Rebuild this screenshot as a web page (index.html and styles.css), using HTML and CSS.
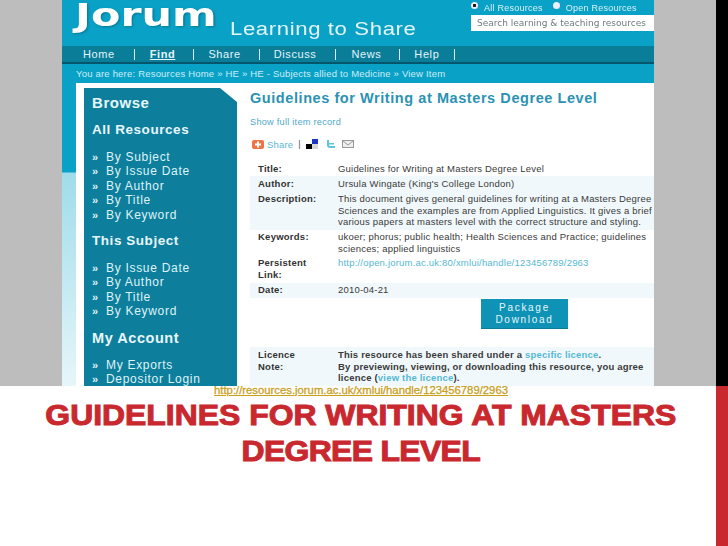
FILE: index.html
```html
<!DOCTYPE html>
<html lang="en">
<head>
<meta charset="utf-8">
<title>Guidelines for Writing at Masters Degree Level</title>
<link rel="stylesheet" href="styles.css">
</head>
<body>
<div class="slide">
  <div class="top">
    <div class="grey"></div>
    <div class="shot">
      <header class="masthead">
        <div class="logo">Jorum</div>
        <div class="tagline">Learning to Share</div>
        <div class="search">
          <div class="radios">
            <span class="radio on"></span><span class="rlabel">All Resources</span>
            <span class="radio"></span><span class="rlabel">Open Resources</span>
          </div>
          <div class="searchbox">Search learning &amp; teaching resources</div>
        </div>
      </header>
      <nav class="nav">
        <span class="navitem home">Home</span><i></i>
        <span class="navitem find">Find</span><i></i>
        <span class="navitem share">Share</span><i></i>
        <span class="navitem discuss">Discuss</span><i></i>
        <span class="navitem news">News</span><i></i>
        <span class="navitem help">Help</span><i></i>
      </nav>
      <div class="crumbs">You are here: Resources Home » HE » HE - Subjects allied to Medicine » View Item</div>
      <div class="body">
        <div class="gutter"></div>
        <div class="page">
          <aside class="side">
            <h2 class="browse">Browse</h2>
            <h3 class="h-all">All Resources</h3>
            <ul>
              <li><b>»</b>By Subject</li>
              <li><b>»</b>By Issue Date</li>
              <li><b>»</b>By Author</li>
              <li><b>»</b>By Title</li>
              <li><b>»</b>By Keyword</li>
            </ul>
            <h3 class="h-sub">This Subject</h3>
            <ul>
              <li><b>»</b>By Issue Date</li>
              <li><b>»</b>By Author</li>
              <li><b>»</b>By Title</li>
              <li><b>»</b>By Keyword</li>
            </ul>
            <h3 class="h-acc">My Account</h3>
            <ul>
              <li><b>»</b>My Exports</li>
              <li><b>»</b>Depositor Login</li>
            </ul>
          </aside>
          <main class="main">
            <h1 class="doc-title">Guidelines for Writing at Masters Degree Level</h1>
            <a class="full">Show full item record</a>
            <div class="sharebar">
              <svg class="ico" width="12" height="9" viewBox="0 0 12 9"><rect width="12" height="9" rx="2" fill="#ee7446"/><path d="M6 1.5v6M3 4.5h6" stroke="#fff" stroke-width="2"/></svg>
              <span class="sharetxt">Share</span>
              <span class="pipe">|</span>
              <svg class="ico" width="13" height="10" viewBox="0 0 13 10"><rect x="0" y="5" width="6" height="5" fill="#000"/><rect x="6" y="0" width="6" height="5" fill="#1a35c8"/><rect x="6" y="5" width="6" height="5" fill="#d8d8d8"/></svg>
              <svg class="ico" width="11" height="9" viewBox="0 0 11 9"><path d="M2 0v5q0 3 3 3h5V6H5Q4 6 4 4.500h5V3H4V0z" fill="#5cc6df"/></svg>
              <svg class="ico" width="12" height="8" viewBox="0 0 12 8"><rect x=".5" y=".5" width="11" height="7" fill="#eee" stroke="#999"/><path d="M.5.5L6 5l5.500-4.500" fill="none" stroke="#999"/></svg>
            </div>
            <div class="meta">
              <div class="row r-title"><span class="k">Title:</span><span class="v">Guidelines for Writing at Masters Degree Level</span></div>
              <div class="row alt r-auth"><span class="k">Author:</span><span class="v">Ursula Wingate (King's College London)</span></div>
              <div class="row alt r-desc"><span class="k">Description:</span><span class="v">This document gives general guidelines for writing at a Masters Degree<br>Sciences and the examples are from Applied Linguistics. It gives a brief<br>various papers at masters level with the correct structure and styling.</span></div>
              <div class="row r-keys"><span class="k">Keywords:</span><span class="v">ukoer; phorus; public health; Health Sciences and Practice; guidelines<br>sciences; applied linguistics</span></div>
              <div class="row r-link"><span class="k">Persistent<br>Link:</span><span class="v"><a class="lnk">http://open.jorum.ac.uk:80/xmlui/handle/123456789/2963</a></span></div>
              <div class="row alt r-date"><span class="k">Date:</span><span class="v">2010-04-21</span></div>
            </div>
            <div class="btnwrap"><div class="btn">Package<br>Download</div></div>
            <div class="row alt r-lic"><span class="k">Licence<br>Note:</span><span class="v strong">This resource has been shared under a <a class="lnk">specific licence</a>.<br>By previewing, viewing, or downloading this resource, you agree<br>licence (<a class="lnk">view the licence</a>).</span></div>
          </main>
        </div>
      </div>
    </div>
    <div class="grey"></div>
    <div class="edge"></div>
  </div>
  <div class="bottom">
    <div class="caption">
      <a class="source">http://resources.jorum.ac.uk/xmlui/handle/123456789/2963</a>
      <div class="title">GUIDELINES FOR WRITING AT MASTERS<br><span class="title-tight">DEGREE LEVEL</span></div>
    </div>
    <div class="redbar"></div>
  </div>
</div>
</body>
</html>
```
FILE: styles.css
```css
* { box-sizing: border-box; }
html, body { margin: 0; padding: 0; background: #fff; }
body { font-family: "Liberation Sans", Arial, sans-serif; }
.slide { width: 728px; height: 546px; overflow: hidden; display: flex; flex-direction: column; }
.top { height: 386px; display: flex; flex: none; overflow: hidden; }
.grey { width: 62px; background: #bdbdbd; flex: none; }
.edge { width: 12px; background: #000; flex: none; }
.shot { width: 592px; flex: none; display: flex; flex-direction: column; overflow: hidden; filter: blur(.35px); }

.masthead { height: 46px; background: #0aa1c6; position: relative; flex: none; }
.logo { position: absolute; left: 13px; top: 0; font: 700 32px/30px "DejaVu Sans", sans-serif; color: #fff; transform: scaleX(1.34); transform-origin: left; text-shadow: 1px 1px 2px #067a98; }
.tagline { position: absolute; left: 168px; top: 17px; font-size: 18px; line-height: 24px; letter-spacing: .5px; color: #e4f5fa; transform: scaleX(1.23); transform-origin: left; white-space: nowrap; }
.search { position: absolute; left: 409px; top: 0; width: 183px; }
.radios { height: 15px; display: flex; align-items: center; color: #d8f1f7; font-size: 9px; letter-spacing: .25px; }
.radio { width: 7px; height: 7px; border-radius: 50%; background: #eef; margin: 0 6px 0 0; position: relative; top: -2px; flex: none; }
.radio.on { background: radial-gradient(circle, #222 30%, #eef 38%); }
.rlabel { margin-right: 10px; white-space: nowrap; }
.searchbox { height: 16px; background: #fff; color: #6d7b80; font: 9px/16px "DejaVu Sans", sans-serif; padding-left: 6px; white-space: nowrap; overflow: hidden; }

.nav { height: 18px; flex: none; background: #0a7d99; border-bottom: 2px solid #04566c; display: flex; align-items: center; color: #e4f5fa; font-size: 11px; letter-spacing: .6px; position: relative; }
.nav i { width: 1px; height: 11px; background: #d5eef5; flex: none; }
.navitem { white-space: nowrap; }
.home { margin: 0 19px 0 21px; }
.find { margin: 0 18px 0 15px; font-weight: 700; text-decoration: underline; }
.share { margin: 0 18px 0 14px; }
.discuss { margin: 0 19px 0 14px; }
.news { margin: 0 18px 0 15px; }
.help { margin: 0 15px 0 14px; }
.crumbs { height: 19px; flex: none; background: #0aa1c6; color: #cdeef6; font-size: 9.500px; line-height: 20px; letter-spacing: .2px; padding-left: 14px; white-space: nowrap; }

.body { flex: 1; display: flex; min-height: 0; background: #fff; }
.gutter { width: 14px; flex: none; background: linear-gradient(#0aa1c6 0, #0aa1c6 89px, #9fdcea 90px, #e6f6fa 100%); }
.page { flex: 1; min-width: 0; display: flex; padding: 5px 0 0 8px; overflow: hidden; }
.side { width: 153px; flex: none; height: 320px; background: #0d7f9d; color: #dff2f7; padding: 0 0 0 8px; clip-path: polygon(0 0, 136px 0, 100% 14px, 100% 100%, 0 100%); }
.side h2, .side h3 { margin: 0; color: #e8f6fa; font-weight: 700; font-size: 13.500px; letter-spacing: .55px; line-height: 16px; white-space: nowrap; }
.side h2.browse { padding-top: 6px; font-size: 15px; line-height: 17px; }
.side h3.h-all { margin-top: 11px; }
.side h3.h-sub { margin-top: 11px; }
.side h3.h-acc { margin-top: 11px; font-size: 14.500px; }
.side ul { list-style: none; margin: 12px 0 0; padding: 0; font-size: 12px; line-height: 14.400px; letter-spacing: .7px; white-space: nowrap; }
.side li b { display: inline-block; width: 14px; font-weight: 700; letter-spacing: 0; font-size: 11px; }

.main { flex: 1; min-width: 0; padding-left: 13px; color: #3a3a3a; font-size: 9.500px; overflow: hidden; }
.doc-title { margin: 0; padding-top: 2px; font-size: 14.500px; line-height: 16px; letter-spacing: .57px; color: #2b92b4; font-weight: 700; white-space: nowrap; }
.full { display: block; margin-top: 10px; line-height: 12px; color: #4fa9c6; font-size: 9.200px; letter-spacing: .25px; }
.sharebar { display: flex; align-items: center; height: 12px; margin: 10px 0 0 2px; color: #59b6d2; }
.sharebar .ico { flex: none; margin-right: 6px; }
.sharetxt { font-size: 9.500px; letter-spacing: .2px; margin: 0 5px 0 -3px; }
.pipe { color: #555; margin-right: 5px; font-size: 9px; }
.meta { margin-top: 11px; }
.row { display: flex; padding-left: 8px; white-space: nowrap; overflow: hidden; line-height: 11.500px; }
.alt { background: #f1f8fb; }
.k { width: 80px; flex: none; font-weight: 700; color: #333; letter-spacing: .25px; }
.v { letter-spacing: .2px; }
.strong { font-weight: 700; letter-spacing: .2px; }
.lnk { color: #55b8d3; }
.r-title { height: 15px; padding-top: 2px; }
.r-auth { height: 15px; padding-top: 2px; }
.r-desc { height: 39px; padding-top: 2px; }
.r-keys { height: 25px; padding-top: 1px; }
.r-link { height: 28px; padding-top: 2px; }
.r-date { height: 15px; padding-top: 1px; }
.btnwrap { height: 49px; padding: 1px 0 0 231px; }
.btn { width: 87px; height: 30px; background: #0e93b7; color: #e8f6fa; text-align: center; font-size: 10px; line-height: 12px; letter-spacing: 1.7px; padding-top: 3px; box-shadow: inset 0 -1px 0 #0a7d99; }
.r-lic { height: 40px; padding-top: 2px; }

.bottom { flex: 1; min-height: 0; display: flex; }
.caption { flex: 1; min-width: 0; display: flex; flex-direction: column; align-items: center; padding-left: 6px; }
.source { font-size: 11.300px; line-height: 12px; margin-top: -2px; color: #c9a01e; text-decoration: underline; white-space: nowrap; -webkit-text-stroke: .3px #c9a01e; }
.title { margin-top: 1px; font-weight: 700; font-size: 29px; line-height: 36px; color: #c9282e; text-align: center; white-space: nowrap; -webkit-text-stroke: 1px #c9282e; transform: scaleX(1.1); }
.title-tight { letter-spacing: -.6px; }
.redbar { width: 12px; flex: none; background: #c9282e; }
```
